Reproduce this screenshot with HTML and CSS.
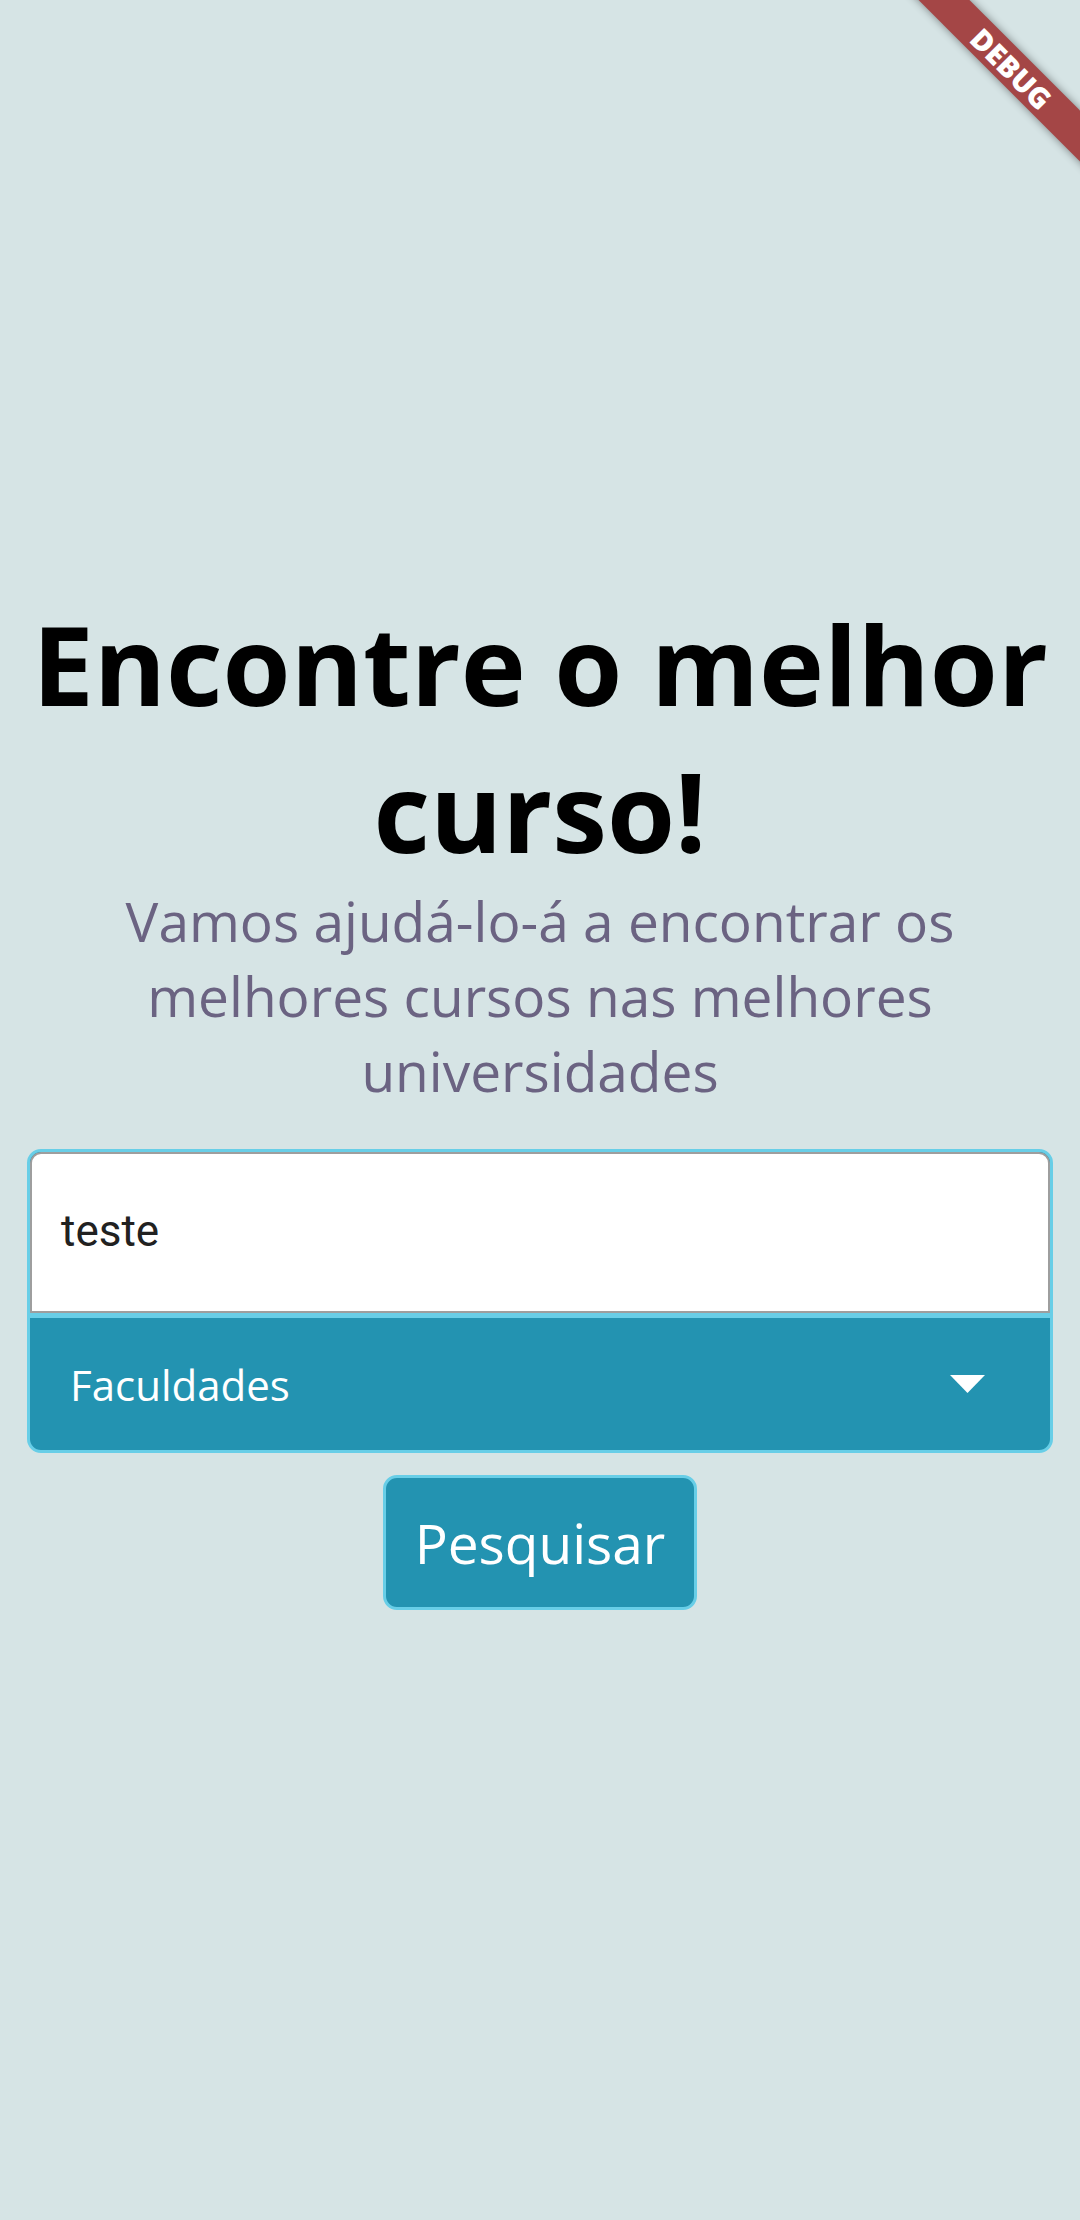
FILE: index.html
```html
<!DOCTYPE html>
<html lang="pt">
<head>
<meta charset="utf-8">
<title>Encontre o melhor curso</title>
<link rel="stylesheet" href="styles.css">
</head>
<body>
<main class="page">
  <h1 class="title">Encontre o melhor curso!</h1>
  <p class="subtitle">Vamos ajudá-lo-á a encontrar os melhores cursos nas melhores universidades</p>
  <div class="search-box">
    <div class="field"><span class="field-text">teste</span></div>
    <div class="dropdown">
      <span class="dropdown-label">Faculdades</span>
      <svg class="dropdown-arrow" width="35" height="18" viewBox="0 0 35 18"><path d="M0 0 L35 0 L17.5 18 Z" fill="#ffffff"/></svg>
    </div>
  </div>
  <button class="search-btn" type="button">Pesquisar</button>
</main>
<div class="debug-banner"><span>DEBUG</span></div>
</body>
</html>
```

FILE: styles.css
```css
html, body {
  margin: 0;
  padding: 0;
}
body {
  width: 1080px;
  height: 2220px;
  overflow: hidden;
  background: #d6e4e5;
  font-family: "Open Sans", "Noto Sans", sans-serif;
  position: relative;
}
.page {
  display: flex;
  flex-direction: column;
  align-items: center;
  padding-top: 590px;
}
.title {
  margin: 0;
  width: 1080px;
  text-align: center;
  font-family: "Open Sans", sans-serif;
  font-weight: 700;
  font-size: 110px;
  line-height: 147px;
  color: #000000;
}
.subtitle {
  margin: -1px 0 0 0;
  padding: 0 60px;
  box-sizing: border-box;
  width: 1080px;
  text-align: center;
  font-family: "Open Sans", sans-serif;
  font-weight: 400;
  font-size: 55px;
  line-height: 75px;
  color: #6b6382;
}
.search-box {
  margin-top: 41px;
  width: 1026px;
  box-sizing: border-box;
  border: 3px solid #68cee7;
  border-radius: 14px;
  background: #2393b1;
  overflow: hidden;
  display: flex;
  flex-direction: column;
}
.field {
  height: 161px;
  box-sizing: border-box;
  background: #ffffff;
  border: 2.75px solid #9e9e9e;
  border-radius: 11px 11px 0 0;
  display: flex;
  align-items: center;
  padding-left: 29px;
}
.field-text {
  font-family: Roboto, "Liberation Sans", sans-serif;
  font-size: 44px;
  color: #212121;
  position: relative;
  top: -2px;
}
.dropdown {
  height: 137px;
  box-sizing: border-box;
  border-top: 5px solid #68cee7;
  display: flex;
  align-items: center;
  justify-content: space-between;
  padding: 0 65px 0 40px;
}
.dropdown-label {
  font-family: "Open Sans", sans-serif;
  font-size: 42px;
  line-height: 57px;
  color: #ffffff;
}
.dropdown-arrow {
  display: block;
}
.search-btn {
  margin-top: 22px;
  box-sizing: border-box;
  height: 135px;
  padding: 27px 29px;
  border: 3px solid #68cee7;
  border-radius: 14px;
  background: #2393b1;
  color: #ffffff;
  font-family: "Open Sans", sans-serif;
  font-size: 55px;
  line-height: 75px;
  font-weight: 400;
}
.debug-banner {
  position: absolute;
  left: 862px;
  top: 50px;
  width: 300px;
  height: 36px;
  background: #a44646;
  box-shadow: 0 0 8px rgba(0, 0, 0, 0.45);
  transform: rotate(45deg);
  display: flex;
  align-items: center;
  justify-content: center;
}
.debug-banner span {
  font-family: "Open Sans", "DejaVu Sans", sans-serif;
  font-weight: 800;
  font-size: 29px;
  line-height: 29px;
  color: #ffffff;
}
```
